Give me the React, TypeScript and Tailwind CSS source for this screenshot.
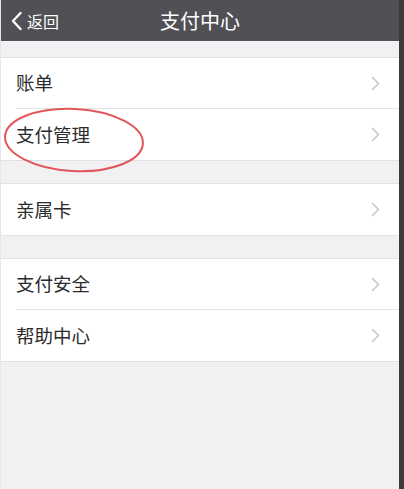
import React from 'react';

const font = { fontFamily: '"Noto Sans CJK SC", "Noto Sans", sans-serif' };

const Chevron = () => (
  <svg width="9" height="15" viewBox="0 0 9 15" className="shrink-0">
    <path d="M1.5 1.5 L7.5 7.5 L1.5 13.5" fill="none" stroke="#c4c4c8" strokeWidth="1.5" strokeLinecap="round" strokeLinejoin="round" />
  </svg>
);

const Row = ({ label, last }: { label: string; last?: boolean }) => (
  <div className="flex h-[51px] items-stretch bg-white pl-[15px]">
    <div className={`flex flex-1 items-center justify-between pr-[19px] ${last ? '' : 'border-b border-[#e3e3e6]'}`}>
      <span className="text-[18.5px] text-[#2b2b2b]">{label}</span>
      <Chevron />
    </div>
  </div>
);

const Group = ({ items }: { items: string[] }) => (
  <div className="border-y border-[#e1e1e4] bg-white">
    {items.map((it, i) => (
      <Row key={it} label={it} last={i === items.length - 1} />
    ))}
  </div>
);

export default function App() {
  return (
    <div className="flex h-[489px] w-[404px] overflow-hidden bg-[#f1f1f4]" style={font}>
      <div className="relative flex flex-1 flex-col border-l border-[#e6e6e9]">
        <div className="flex h-[41px] shrink-0 items-center bg-[#505055] relative">
          <div className="flex items-center pl-[9px] text-white">
            <svg width="13" height="20" viewBox="0 0 13 20">
              <path d="M10.5 2 L3 10 L10.5 18" fill="none" stroke="#ffffff" strokeWidth="2.4" strokeLinecap="round" strokeLinejoin="round" />
            </svg>
            <span className="ml-[4px] text-[16px]">返回</span>
          </div>
          <div className="absolute inset-x-0 text-center text-[20px] text-white pointer-events-none">支付中心</div>
        </div>
        <div className="flex flex-col gap-[22px] pt-[16px]">
          <Group items={['账单', '支付管理']} />
          <Group items={['亲属卡']} />
          <Group items={['支付安全', '帮助中心']} />
        </div>
        <svg className="absolute left-0 top-0 pointer-events-none" width="399" height="489">
          <ellipse cx="73" cy="140" rx="69" ry="31" fill="none" stroke="#e2565a" strokeWidth="2" transform="rotate(3 73 140)" />
        </svg>
      </div>
      <div className="w-[5px] shrink-0 bg-[#3b3b3e]" />
    </div>
  );
}
